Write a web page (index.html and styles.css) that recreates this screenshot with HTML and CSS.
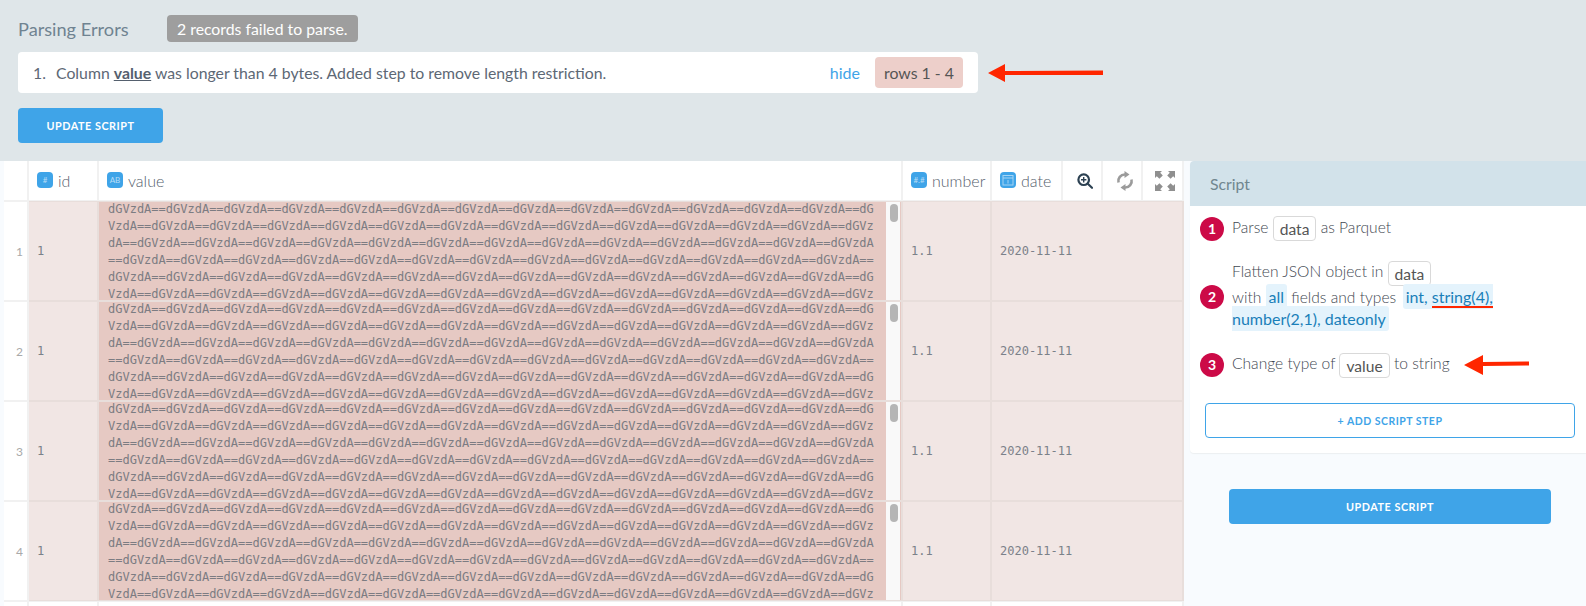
FILE: index.html
```html
<!DOCTYPE html>
<html lang="en">
<head>
<meta charset="utf-8">
<title>Parsing Errors</title>
<link rel="stylesheet" href="styles.css">
</head>
<body>
<section class="errors">
  <div class="errors-head">
    <h1 class="errors-title">Parsing Errors</h1>
    <span class="badge">2 records failed to parse.</span>
  </div>
  <div class="error-card">
    <span class="error-num">1.</span>
    <span class="error-msg">Column <b class="col-name">value</b> was longer than 4 bytes. Added step to remove length restriction.</span>
    <a class="hide-link">hide</a>
    <span class="rows-chip">rows 1 - 4</span>
  </div>
  <button class="btn btn-top">UPDATE SCRIPT</button>
  <svg class="arrow arrow-top" width="116" height="24" viewBox="0 0 116 24"><polygon points="0,12 17,3 17,10 115,9.500 115,14 17,14 17,21" fill="#ff2600"/></svg>
</section>

<main class="main">
  <div class="grid">
    <div class="row head">
      <div class="c gutter"></div>
      <div class="c"><span class="ti">#</span>id</div>
      <div class="c"><span class="ti">AB</span>value</div>
      <div class="c"><span class="ti">#.#</span>number</div>
      <div class="c"><span class="ti ti-cal"><svg width="12" height="12" viewBox="0 0 12 12"><rect x="1" y="1.500" width="10" height="9.500" fill="none" stroke="#a5d4f4" stroke-width="1"/><path d="M1 4h10" stroke="#a5d4f4"/><path d="M6 6v3.500" stroke="#a5d4f4"/></svg></span>date</div>
      <div class="c tool">
        <svg width="16" height="16" viewBox="0 0 16 16"><circle cx="6.700" cy="6.700" r="5.300" fill="none" stroke="#2c4152" stroke-width="2.200"/><path d="M10.800 10.800L15 14.800" stroke="#2c4152" stroke-width="2.200" stroke-linecap="round"/><path d="M6.700 4v5.400M4 6.700h5.400" stroke="#2c4152" stroke-width="1.400"/></svg>
      </div>
      <div class="c tool">
        <svg width="18" height="20" viewBox="0 0 18 20"><path d="M2.500 11.500A6.500 6.500 0 0 1 9 3.500M15.500 8.500A6.500 6.500 0 0 1 9 16.500" fill="none" stroke="#9b9b9b" stroke-width="2.600"/><polygon points="8.500,0 13.500,3.500 8.500,7" fill="#9b9b9b"/><polygon points="9.500,13 4.500,16.500 9.500,20" fill="#9b9b9b"/></svg>
      </div>
      <div class="c tool">
        <svg width="20" height="20" viewBox="0 0 20 20" fill="#8f8f8f"><path d="M0 0h7L5.200 1.800l2.600 2.600-3.400 3.400-2.600-2.600L0 7zM20 0v7l-1.800-1.800-2.600 2.600-3.400-3.400 2.600-2.600L13 0zM0 20v-7l1.800 1.800 2.600-2.600 3.400 3.400-2.600 2.600L7 20zM20 20h-7l1.800-1.800-2.600-2.600 3.400-3.400 2.600 2.600L20 13z"/></svg>
      </div>
    </div>

    <div class="row bad">
      <div class="c gutter">1</div>
      <div class="c mono">1</div>
      <div class="c val"><div class="val-text">dGVzdA==dGVzdA==dGVzdA==dGVzdA==dGVzdA==dGVzdA==dGVzdA==dGVzdA==dGVzdA==dGVzdA==dGVzdA==dGVzdA==dGVzdA==dGVzdA==dGVzdA==dGVzdA==dGVzdA==dGVzdA==dGVzdA==dGVzdA==dGVzdA==dGVzdA==dGVzdA==dGVzdA==dGVzdA==dGVzdA==dGVzdA==dGVzdA==dGVzdA==dGVzdA==dGVzdA==dGVzdA==dGVzdA==dGVzdA==dGVzdA==dGVzdA==dGVzdA==dGVzdA==dGVzdA==dGVzdA==dGVzdA==dGVzdA==dGVzdA==dGVzdA==dGVzdA==dGVzdA==dGVzdA==dGVzdA==dGVzdA==dGVzdA==dGVzdA==dGVzdA==dGVzdA==dGVzdA==dGVzdA==dGVzdA==dGVzdA==dGVzdA==dGVzdA==dGVzdA==dGVzdA==dGVzdA==dGVzdA==dGVzdA==dGVzdA==dGVzdA==dGVzdA==dGVzdA==dGVzdA==dGVzdA==dGVzdA==dGVzdA==dGVzdA==dGVzdA==dGVzdA==dGVzdA==dGVzdA==dGVzdA==dGVzdA==dGVzdA==dGVzdA==dGVzdA==</div><div class="track"><span class="thumb"></span></div></div>
      <div class="c mono">1.1</div>
      <div class="c mono">2020-11-11</div>
    </div>
    <div class="row bad">
      <div class="c gutter">2</div>
      <div class="c mono">1</div>
      <div class="c val"><div class="val-text">dGVzdA==dGVzdA==dGVzdA==dGVzdA==dGVzdA==dGVzdA==dGVzdA==dGVzdA==dGVzdA==dGVzdA==dGVzdA==dGVzdA==dGVzdA==dGVzdA==dGVzdA==dGVzdA==dGVzdA==dGVzdA==dGVzdA==dGVzdA==dGVzdA==dGVzdA==dGVzdA==dGVzdA==dGVzdA==dGVzdA==dGVzdA==dGVzdA==dGVzdA==dGVzdA==dGVzdA==dGVzdA==dGVzdA==dGVzdA==dGVzdA==dGVzdA==dGVzdA==dGVzdA==dGVzdA==dGVzdA==dGVzdA==dGVzdA==dGVzdA==dGVzdA==dGVzdA==dGVzdA==dGVzdA==dGVzdA==dGVzdA==dGVzdA==dGVzdA==dGVzdA==dGVzdA==dGVzdA==dGVzdA==dGVzdA==dGVzdA==dGVzdA==dGVzdA==dGVzdA==dGVzdA==dGVzdA==dGVzdA==dGVzdA==dGVzdA==dGVzdA==dGVzdA==dGVzdA==dGVzdA==dGVzdA==dGVzdA==dGVzdA==dGVzdA==dGVzdA==dGVzdA==dGVzdA==dGVzdA==dGVzdA==dGVzdA==dGVzdA==dGVzdA==dGVzdA==dGVzdA==dGVzdA==dGVzdA==</div><div class="track"><span class="thumb"></span></div></div>
      <div class="c mono">1.1</div>
      <div class="c mono">2020-11-11</div>
    </div>
    <div class="row bad">
      <div class="c gutter">3</div>
      <div class="c mono">1</div>
      <div class="c val"><div class="val-text">dGVzdA==dGVzdA==dGVzdA==dGVzdA==dGVzdA==dGVzdA==dGVzdA==dGVzdA==dGVzdA==dGVzdA==dGVzdA==dGVzdA==dGVzdA==dGVzdA==dGVzdA==dGVzdA==dGVzdA==dGVzdA==dGVzdA==dGVzdA==dGVzdA==dGVzdA==dGVzdA==dGVzdA==dGVzdA==dGVzdA==dGVzdA==dGVzdA==dGVzdA==dGVzdA==dGVzdA==dGVzdA==dGVzdA==dGVzdA==dGVzdA==dGVzdA==dGVzdA==dGVzdA==dGVzdA==dGVzdA==dGVzdA==dGVzdA==dGVzdA==dGVzdA==dGVzdA==dGVzdA==dGVzdA==dGVzdA==dGVzdA==dGVzdA==dGVzdA==dGVzdA==dGVzdA==dGVzdA==dGVzdA==dGVzdA==dGVzdA==dGVzdA==dGVzdA==dGVzdA==dGVzdA==dGVzdA==dGVzdA==dGVzdA==dGVzdA==dGVzdA==dGVzdA==dGVzdA==dGVzdA==dGVzdA==dGVzdA==dGVzdA==dGVzdA==dGVzdA==dGVzdA==dGVzdA==dGVzdA==dGVzdA==dGVzdA==dGVzdA==dGVzdA==dGVzdA==dGVzdA==dGVzdA==</div><div class="track"><span class="thumb"></span></div></div>
      <div class="c mono">1.1</div>
      <div class="c mono">2020-11-11</div>
    </div>
    <div class="row bad">
      <div class="c gutter">4</div>
      <div class="c mono">1</div>
      <div class="c val"><div class="val-text">dGVzdA==dGVzdA==dGVzdA==dGVzdA==dGVzdA==dGVzdA==dGVzdA==dGVzdA==dGVzdA==dGVzdA==dGVzdA==dGVzdA==dGVzdA==dGVzdA==dGVzdA==dGVzdA==dGVzdA==dGVzdA==dGVzdA==dGVzdA==dGVzdA==dGVzdA==dGVzdA==dGVzdA==dGVzdA==dGVzdA==dGVzdA==dGVzdA==dGVzdA==dGVzdA==dGVzdA==dGVzdA==dGVzdA==dGVzdA==dGVzdA==dGVzdA==dGVzdA==dGVzdA==dGVzdA==dGVzdA==dGVzdA==dGVzdA==dGVzdA==dGVzdA==dGVzdA==dGVzdA==dGVzdA==dGVzdA==dGVzdA==dGVzdA==dGVzdA==dGVzdA==dGVzdA==dGVzdA==dGVzdA==dGVzdA==dGVzdA==dGVzdA==dGVzdA==dGVzdA==dGVzdA==dGVzdA==dGVzdA==dGVzdA==dGVzdA==dGVzdA==dGVzdA==dGVzdA==dGVzdA==dGVzdA==dGVzdA==dGVzdA==dGVzdA==dGVzdA==dGVzdA==dGVzdA==dGVzdA==dGVzdA==dGVzdA==dGVzdA==dGVzdA==dGVzdA==dGVzdA==dGVzdA==</div><div class="track"><span class="thumb"></span></div></div>
      <div class="c mono">1.1</div>
      <div class="c mono">2020-11-11</div>
    </div>
    <div class="row blank">
      <div class="c gutter"></div><div class="c"></div><div class="c"></div><div class="c"></div><div class="c"></div>
    </div>
  </div>

  <aside class="side">
    <div class="panel">
      <div class="panel-head">Script</div>
      <div class="panel-body">
        <div class="step step-1">
          <span class="num">1</span>
          <div class="step-text">Parse <span class="chip">data</span> as Parquet</div>
        </div>
        <div class="step step-2">
          <span class="num">2</span>
          <div class="step-text step-text-wrap">Flatten JSON object in <span class="chip">data</span><br>with <span class="hl">all</span> fields and types &nbsp;<span class="hl hl-types">int, <span class="red-under">string(4),</span><br>number(2,1), dateonly</span></div>
        </div>
        <div class="step step-3">
          <span class="num">3</span>
          <div class="step-text">Change type of <span class="chip">value</span> to string</div>
          <svg class="arrow arrow-step" width="66" height="22" viewBox="0 0 66 22"><polygon points="0,11 19,1 19,8 65,7.500 65,11.500 19,12 19,21" fill="#ff2600"/></svg>
        </div>
        <button class="btn-outline">+ ADD SCRIPT STEP</button>
      </div>
    </div>
    <button class="btn btn-side">UPDATE SCRIPT</button>
  </aside>
</main>
</body>
</html>
```

FILE: styles.css
```css
* { box-sizing: border-box; }
html, body { margin: 0; height: 606px; overflow: hidden; }
body { background: #f8fbfe; font-family: Lato, "Open Sans", sans-serif; color: #5d6875; }

.errors { position: relative; height: 161px; background: #dfe6e9; padding: 15px 18px 0; }
.errors-head { display: flex; align-items: center; height: 27px; }
.errors-title { margin: 0; width: 149px; font-size: 18.200px; font-weight: 400; color: #6f8391; }
.badge { height: 27px; line-height: 27px; padding: 0 10px; border-radius: 4px; background: #9e9e9e; color: #fff; font-size: 15.800px; }
.error-card { display: flex; align-items: center; width: 960px; height: 41px; margin-top: 10px; padding: 0 15px; background: #fff; border-radius: 4px; font-size: 15.800px; }
.error-num { width: 23px; }
.error-msg { flex: 1; }
.col-name { color: #55606e; text-decoration: underline; font-weight: 700; }
.hide-link { color: #3fa4e8; margin-right: 15px; font-size: 16px; }
.rows-chip { width: 88px; height: 31px; line-height: 31px; text-align: center; border-radius: 4px; background: #edcfca; color: #555; }

.btn { display: block; border: 0; border-radius: 4px; background: #3fa4e8; color: #fff; font: 700 10.800px Lato, sans-serif; letter-spacing: .55px; }
.btn-top { width: 145px; height: 35px; margin-top: 15px; }
.arrow { position: absolute; display: block; }
.arrow-top { left: 988px; top: 61px; }

.main { display: flex; height: 445px; }
.grid { width: 1180px; margin-left: 4px; flex: none; background: #fff; }
.row { display: grid; grid-template-columns: 25px 70px 804px 89px 192px; height: 100px; }
.row.head { grid-template-columns: 25px 70px 804px 89px 71px 40px 40px 41px; height: 40px; }
.row.blank { height: 5px; }
.c { box-shadow: inset -2px 0 0 #f1f1f1, inset 0 1px 0 #f1f1f1; min-width: 0; white-space: nowrap; }
.head .c { display: flex; align-items: center; padding: 0 0 2px 8px; font-size: 16px; font-weight: 300; color: #55606c; box-shadow: inset -2px 0 0 #f1f1f1, inset 0 -1px 0 #f1f1f1; }
.head .tool { justify-content: center; padding: 0 0 0 3px; }
.head .gutter { padding: 0; }
.ti { flex: none; display: flex; align-items: center; justify-content: center; width: 16px; height: 16px; margin-right: 5px; border-radius: 4px; background: #3fa4e8; color: #b6dcf6; font: 400 8px Lato, sans-serif; }
.ti-cal svg { display: block; }

.gutter { display: flex; align-items: center; padding-left: 12px; font-size: 12px; color: #a9a9a9; background: #fff; }
.bad .c { background: #f1e6e4; box-shadow: inset -2px 0 0 #e8dedb, inset 0 1px 0 #e8dedb, inset 0 -1px 0 #e8dedb; display: flex; align-items: center; padding-left: 8px; }
.bad .gutter { background: #fff; box-shadow: inset -2px 0 0 #f1f1f1, inset 0 1px 0 #f1f1f1, inset 0 -1px 0 #f1f1f1; padding-left: 12px; color: #a9a9a9; font-family: Lato, sans-serif; }
.mono { font: 12px "DejaVu Sans Mono", "Liberation Mono", monospace; color: #7b8189; }
.bad .val { background: #e6c9c3; align-items: stretch; justify-content: space-between; padding: 0 3px 0 9px; overflow: hidden; }
.val-text { width: 768px; height: 99px; overflow: hidden; word-break: break-all; white-space: normal; font: 12px/17px "DejaVu Sans Mono", "Liberation Mono", monospace; color: #7c7c82; }
.track { width: 14px; height: 98px; margin-top: 1px; padding: 2px 2px 0 4px; background: #f9f9f9; }
.thumb { display: block; width: 8px; height: 18px; border-radius: 4px; background: #b5b5b5; }

.side { flex: 1; display: flex; flex-direction: column; margin-left: 6px; }
.panel { height: 292px; background: #fff; border-radius: 4px 0 0 4px; box-shadow: 0 1px 1px #eceff1; }
.panel-head { height: 45px; line-height: 45px; padding-left: 20px; background: #d2e2ea; color: #70868f; font-size: 15.800px; border-radius: 4px 0 0 0; }
.panel-body { padding: 10px 11px 0 10px; }
.step { display: flex; align-items: center; position: relative; }
.step-1 { height: 25px; }
.step-2 { height: 71px; margin-top: 20px; }
.step-3 { height: 26px; margin-top: 20px; }
.num { flex: none; width: 24px; height: 24px; line-height: 24px; margin-right: 8px; text-align: center; border-radius: 50%; background: #cc0a47; color: #fff; font-weight: 700; font-size: 14px; }
.step-text { font-size: 15.600px; font-weight: 300; color: #3f4852; line-height: 23px; }
.step-text-wrap { line-height: 22.500px; margin-top: -2px; }
.chip { display: inline-block; padding: 0 6px; height: 25px; line-height: 24px; border: 1px solid #d9d9d9; border-radius: 4px; background: #fff; font-weight: 400; color: #555; vertical-align: middle; }
.hl { background: #e4f3fc; color: #1a7fb9; font-size: 16px; font-weight: 400; padding: 3px 3px; border-radius: 3px; }
.hl-types { margin-left: -2px; }
.red-under { border-bottom: 2px solid #ff2600; }
.arrow-step { left: 264px; top: 2px; }
.btn-outline { display: block; width: 370px; height: 35px; margin: 25px 0 0 5px; background: #fff; border: 1px solid #3fa4e8; border-radius: 4px; color: #3fa4e8; font: 700 10.500px Lato, sans-serif; letter-spacing: .5px; }
.btn-side { width: 322px; height: 35px; margin: 36px 0 0 39px; }
```
